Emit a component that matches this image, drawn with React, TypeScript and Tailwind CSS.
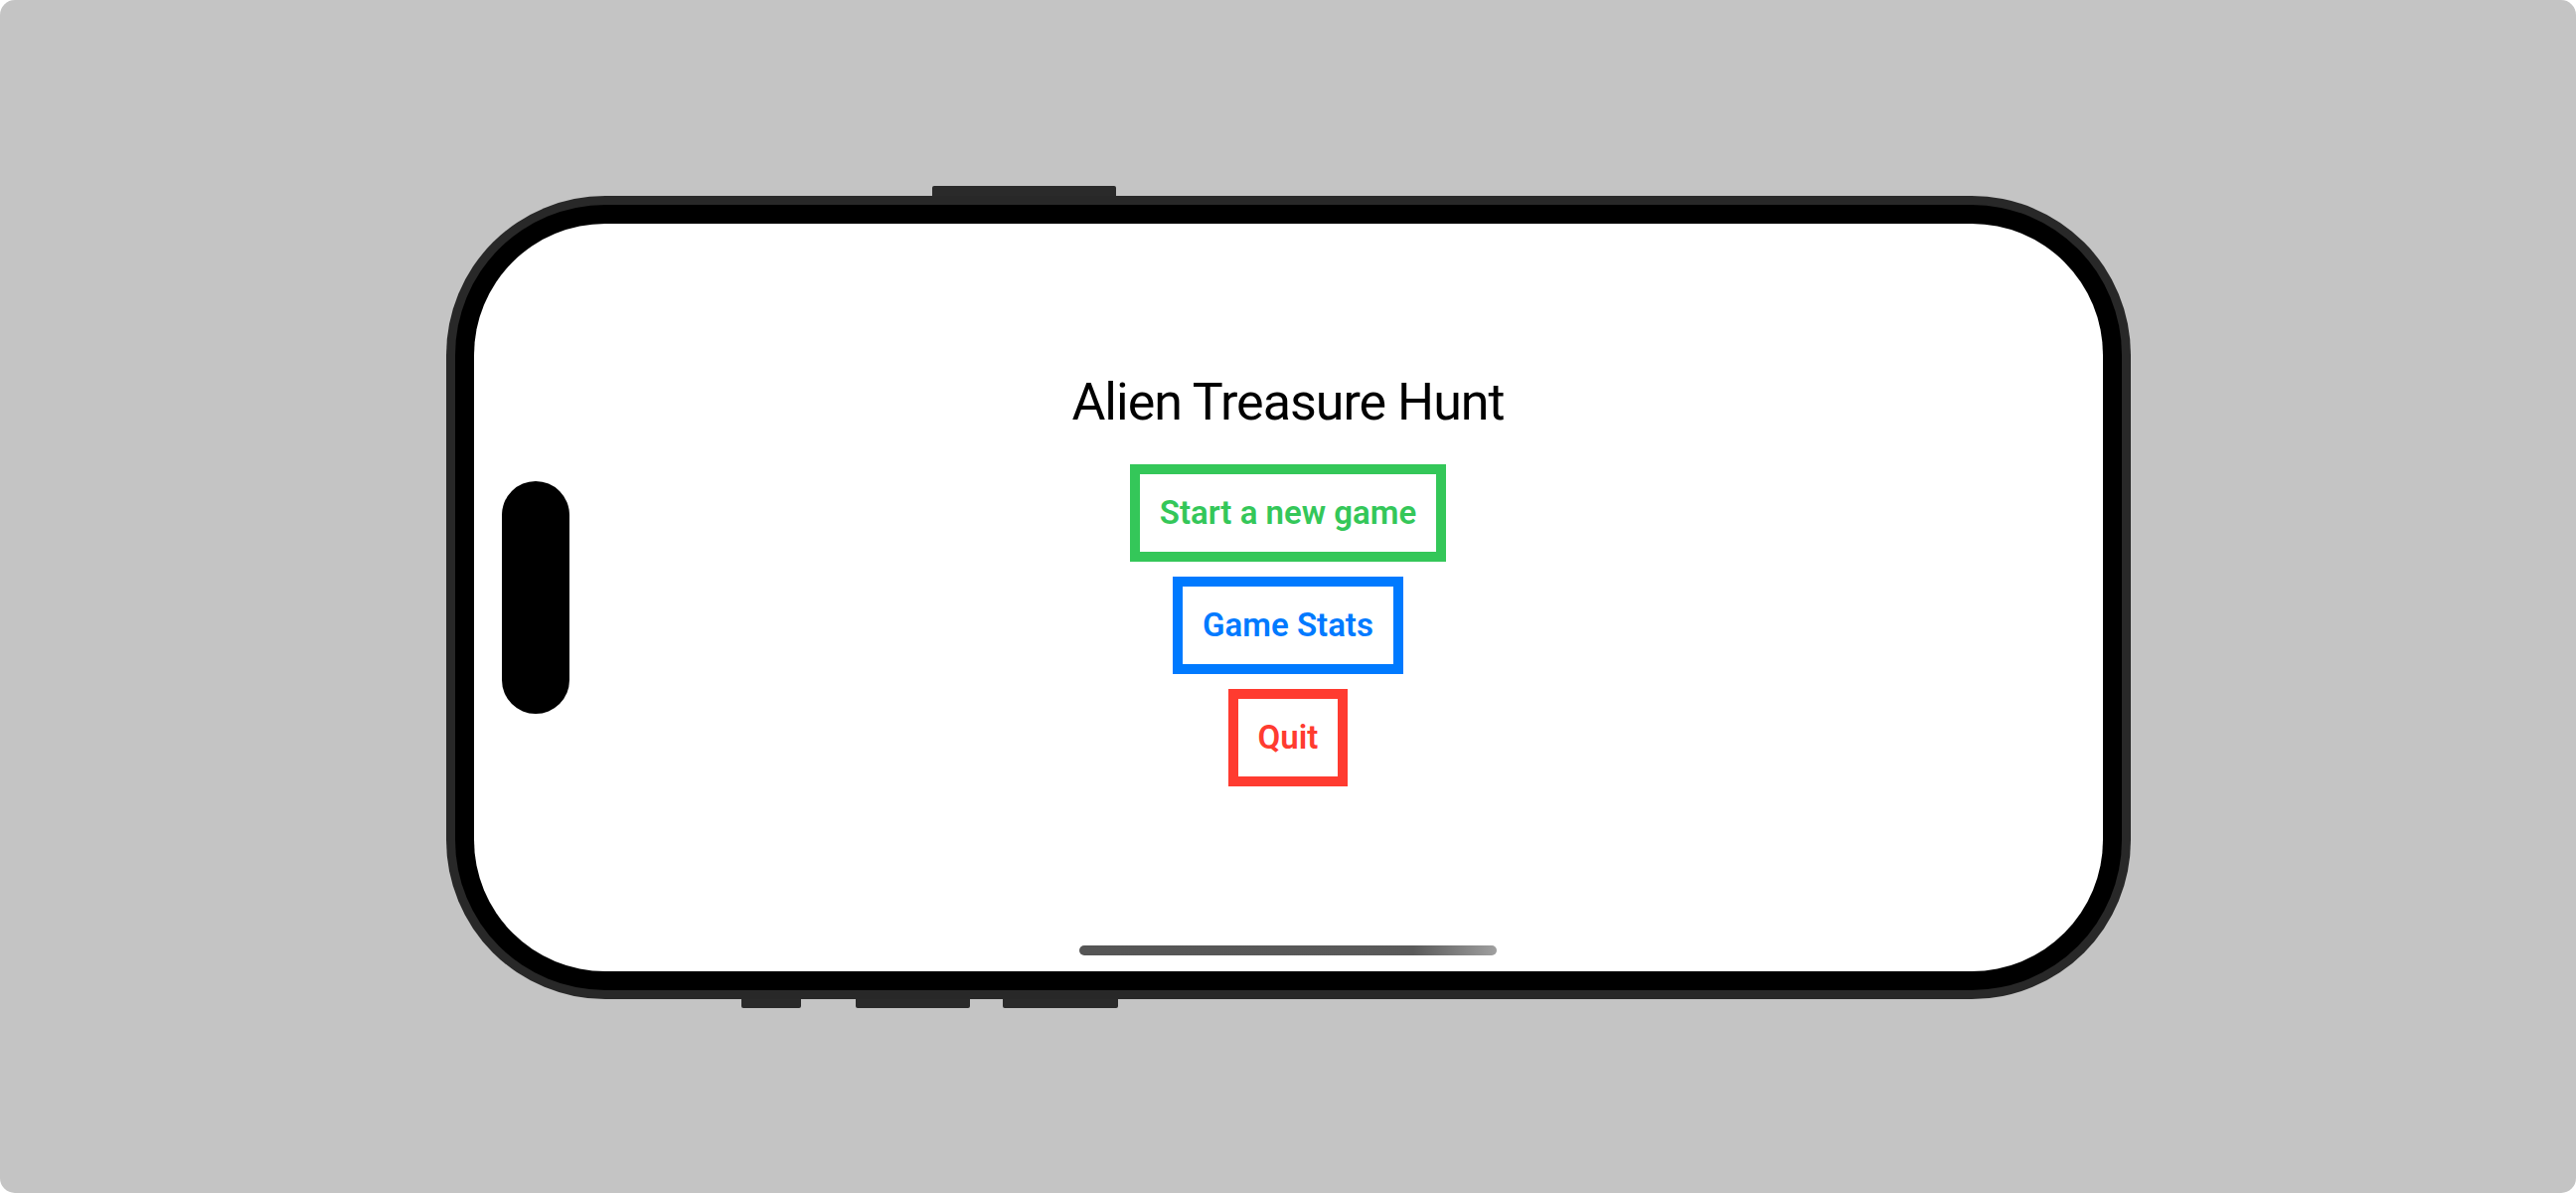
import React from 'react'

const btn = 'border-[10px] px-[20px] h-[98px] flex items-center justify-center text-[33px] font-semibold leading-none'

function MenuButton({ label, color }: { label: string; color: 'green' | 'blue' | 'red' }) {
  const cls =
    color === 'green'
      ? 'border-[#34C759] text-[#34C759]'
      : color === 'blue'
        ? 'border-[#007AFF] text-[#007AFF]'
        : 'border-[#FF3B30] text-[#FF3B30]'
  return (
    <button className={`${btn} ${cls}`} style={{ fontFamily: 'Roboto, "Noto Sans", sans-serif' }}>
      {label}
    </button>
  )
}

export default function App() {
  return (
    <div className="w-[2592px] h-[1200px] bg-white">
      <div className="w-full h-full bg-[#c4c4c4] rounded-[15px] flex items-center justify-center">
        <div className="flex flex-col">
          {/* top side button */}
          <div className="h-[10px] flex">
            <div className="ml-[489px] w-[185px] h-[10px] bg-[#2a2a2a] rounded-t-[2px]" />
          </div>

          {/* phone body */}
          <div className="w-[1695px] h-[808px] bg-[#282828] rounded-[160px] p-[9px]">
            <div className="w-full h-full bg-black rounded-[151px] p-[19px]">
              <div className="relative w-full h-full bg-white rounded-[132px] flex flex-col items-center pt-[154px]">
                <div className="absolute left-[28px] top-[259px] w-[68px] h-[234px] bg-black rounded-full" />

                <h1
                  className="text-[52px] leading-none font-normal text-black tracking-[-1px]"
                  style={{ fontFamily: 'Roboto, "Noto Sans", sans-serif' }}
                >
                  Alien Treasure Hunt
                </h1>

                <div className="mt-[36px] flex flex-col items-center gap-[15px]">
                  <MenuButton label="Start a new game" color="green" />
                  <MenuButton label="Game Stats" color="blue" />
                  <MenuButton label="Quit" color="red" />
                </div>

                <div className="absolute bottom-[16px] left-1/2 -translate-x-1/2 w-[420px] h-[10px] rounded-full bg-gradient-to-r from-[#555555] via-[#5a5a5a] via-80% to-[#a0a0a0]" />
              </div>
            </div>
          </div>

          {/* bottom side buttons */}
          <div className="h-[9px] flex">
            <div className="ml-[297px] w-[60px] h-[9px] bg-[#2a2a2a] rounded-b-[2px]" />
            <div className="ml-[55px] w-[115px] h-[9px] bg-[#2a2a2a] rounded-b-[2px]" />
            <div className="ml-[33px] w-[116px] h-[9px] bg-[#2a2a2a] rounded-b-[2px]" />
          </div>
        </div>
      </div>
    </div>
  )
}
